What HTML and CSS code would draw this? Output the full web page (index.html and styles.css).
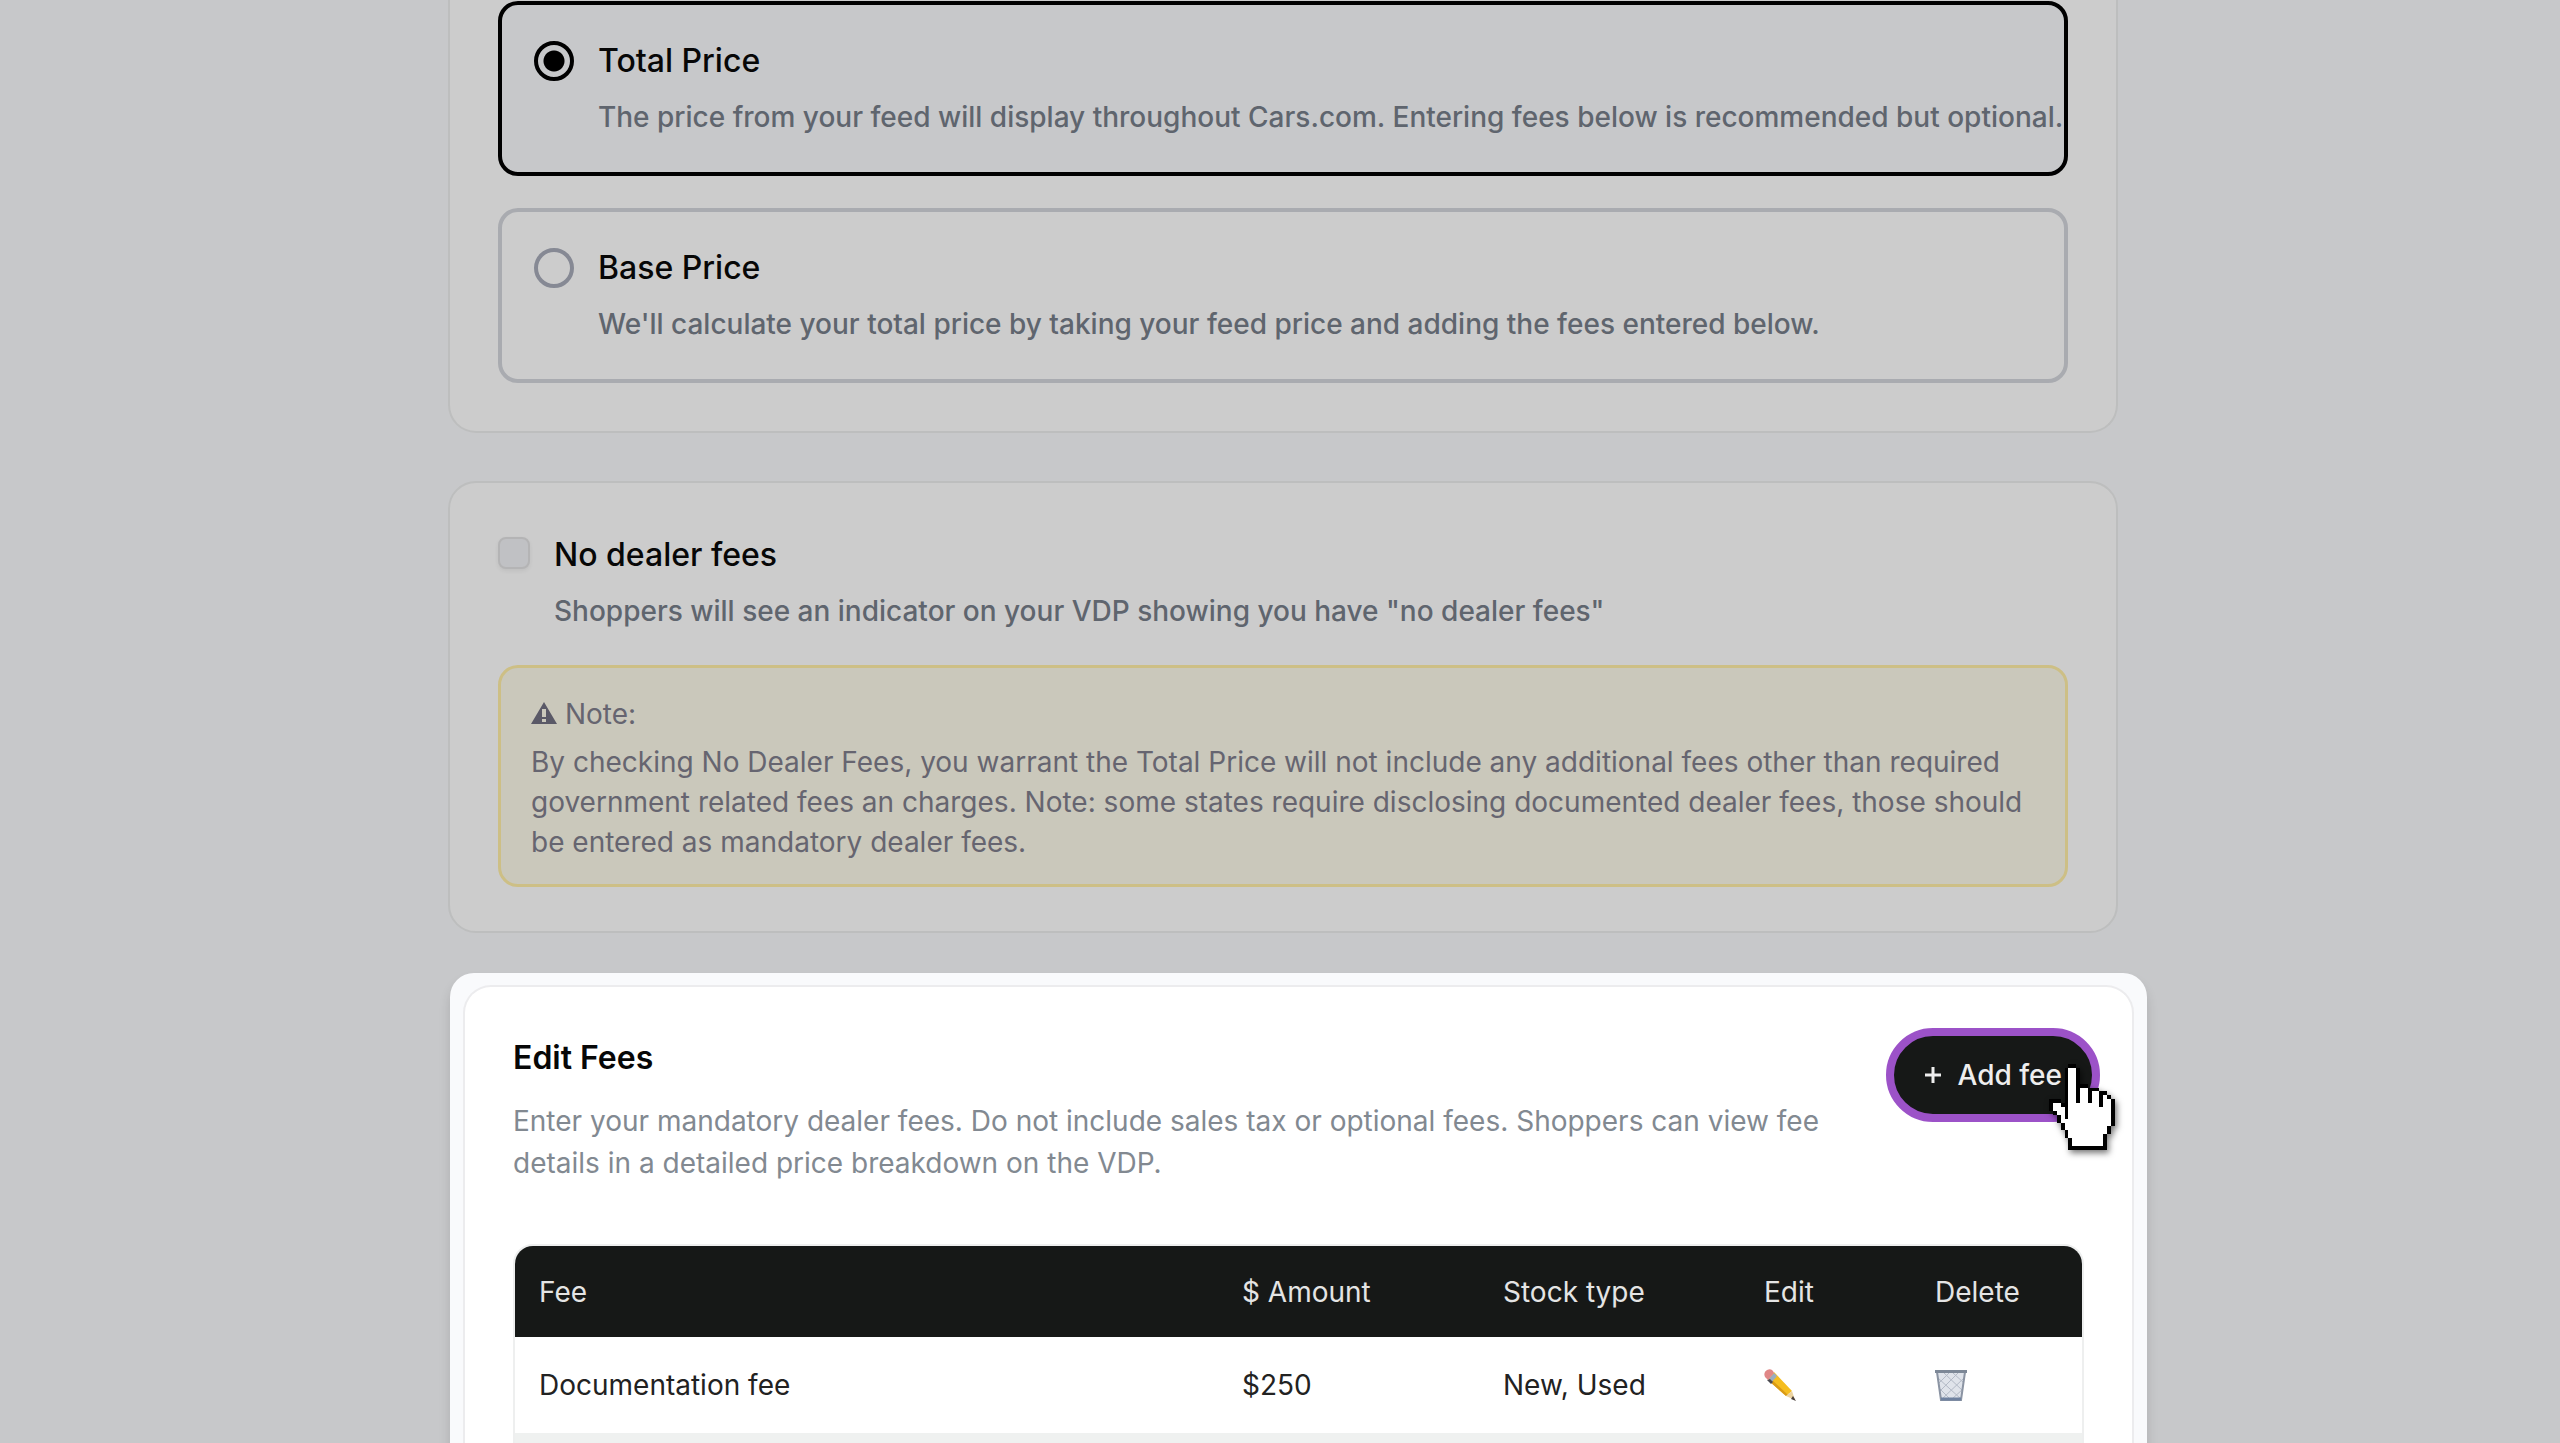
FILE: index.html
```html
<!DOCTYPE html>
<html lang="en">
<head>
<meta charset="utf-8">
<title>Pricing and fees</title>
<link rel="stylesheet" href="styles.css">
</head>
<body>
<main class="page">
  <section class="card card-pricing">
    <div class="option option-selected">
      <input class="radio" type="radio" name="price" id="total" checked>
      <label class="option-text" for="total">
        <span class="title">Total Price</span>
        <span class="desc nowrap">The price from your feed will display throughout Cars.com. Entering fees below is recommended but optional.</span>
      </label>
    </div>
    <div class="option">
      <input class="radio" type="radio" name="price" id="base">
      <label class="option-text" for="base">
        <span class="title">Base Price</span>
        <span class="desc">We'll calculate your total price by taking your feed price and adding the fees entered below.</span>
      </label>
    </div>
  </section>

  <section class="card card-dealer">
    <div class="check-row">
      <input class="checkbox" type="checkbox" id="nofees">
      <label class="option-text" for="nofees">
        <span class="title">No dealer fees</span>
        <span class="desc">Shoppers will see an indicator on your VDP showing you have "no dealer fees"</span>
      </label>
    </div>
    <div class="note">
      <p class="note-head">
        <svg class="warn" viewBox="0 0 26 22" aria-hidden="true"><path fill="currentColor" fill-rule="evenodd" d="M13 0 26 22H0ZM11 7v8h4V7ZM11 17v3h4v-3Z"/></svg>
        Note:
      </p>
      <p class="note-body">By checking No Dealer Fees, you warrant the Total Price will not include any additional fees other than required government related fees an charges. Note: some states require disclosing documented dealer fees, those should be entered as mandatory dealer fees.</p>
    </div>
  </section>

  <div class="spotlight">
    <section class="fees">
      <header class="fees-head">
        <div class="fees-intro">
          <h2 class="fees-title">Edit Fees</h2>
          <p class="fees-desc">Enter your mandatory dealer fees. Do not include sales tax or optional fees. Shoppers can view fee details in a detailed price breakdown on the VDP.</p>
        </div>
        <div class="add-wrap">
          <button class="add" type="button">
            <svg class="plus" viewBox="0 0 18 18" aria-hidden="true"><path d="M9 1v16M1 9h16" stroke="currentColor" stroke-width="3" fill="none"/></svg>
            Add fee
          </button>
          <svg class="cursor" viewBox="0 0 17 22" shape-rendering="crispEdges" aria-hidden="true">
            <path fill="#000" d="M5 0h2v1h1v4h2v1h3v1h2v1h1v1h1v7h-1v2h-1v4H5v-3H4v-2H3v-2H2v-2H1v-1H0V9h3v1h1V1h1z"/>
            <path fill="#fff" d="M5 1h2v9h1V6h2v4h1V7h2v4h1V8h1v1h1v7h-1v2h-1v3H6v-2H5v-2H4v-2H3v-2H2v-1H1v-2h2v1h1v3h1z"/>
          </svg>
        </div>
      </header>
      <table class="table">
        <thead>
          <tr><th class="c-fee">Fee</th><th class="c-amount">$ Amount</th><th class="c-stock">Stock type</th><th class="c-edit">Edit</th><th>Delete</th></tr>
        </thead>
        <tbody>
          <tr>
            <td>Documentation fee</td><td>$250</td><td>New, Used</td>
            <td><button class="icon" type="button" aria-label="Edit fee">
              <svg viewBox="0 0 32 32" aria-hidden="true">
                <path d="M10 3 28 22 22 27 4 11Z" fill="#f5bd1f"/>
                <path d="M4 11 6 9 24 26 22 27Z" fill="#d99a17"/>
                <path d="M10 4 13 7 7 14 4 11Z" fill="#9aacc0"/>
                <path d="M6 10 9 13 7 15 3 11Z" fill="#4a4a50"/>
                <path d="M1 8Q-1 3 3 1Q7-1 9 2L10 4 4 11Z" fill="#e08787"/>
                <path d="M28 22 31 31 22 27Z" fill="#ecd3a0"/>
                <path d="M29 27 32 32 27 30Z" fill="#4a3f3a"/>
              </svg></button></td>
            <td><button class="icon" type="button" aria-label="Delete fee">
              <svg viewBox="0 0 32 32" aria-hidden="true">
                <path d="M2 3H30L26 31H6Z" fill="#dfe3ea"/>
                <path d="M3 9 26 30M5 20 15 30M9 4 28 22M18 4 29 14M29 9 7 30M28 20 17 30M23 4 5 22M14 4 4 14" stroke="#b3bac6" fill="none"/>
                <path d="M2 3 6 31H26L30 3" stroke="#8b94a3" stroke-width="2" fill="none"/>
                <path d="M6 30H26" stroke="#6f82a0" stroke-width="3"/>
                <path d="M0 1H32V4H0Z" fill="#7d8897"/>
              </svg></button></td>
          </tr>
          <tr class="alt"><td></td><td></td><td></td><td></td><td></td></tr>
        </tbody>
      </table>
    </section>
  </div>
</main>
</body>
</html>
```
FILE: styles.css
```css
* { box-sizing: border-box; }

body {
  margin: 0;
  height: 100vh;
  overflow: hidden;
  background: #c7c8ca;
  color: #070707;
  font-family: Inter, "Liberation Sans", sans-serif;
  font-size: 28px;
}

p, h2 { margin: 0; }

.page { padding: 0 442px 0 448px; }

.card {
  border: 2px solid #bdbebe;
  border-radius: 28px;
  background: #ccc;
  padding: 48px;
}

.card-pricing {
  display: grid;
  grid-template-columns: minmax(0, 1fr);
  gap: 32px;
  border-top: 0;
  border-radius: 0 0 28px 28px;
  padding-top: 1px;
}

.option {
  display: flex;
  gap: 24px;
  height: 175px;
  border: 4px solid #a9abb0;
  border-radius: 20px;
  padding: 36px 32px;
}

.option-selected {
  border-color: #000;
  background: #c7c8ca;
}

.radio {
  appearance: none;
  flex: none;
  width: 40px;
  height: 40px;
  margin: 0;
  border: 4px solid #868994;
  border-radius: 50%;
}

.radio:checked {
  border-color: #000;
  background: radial-gradient(circle, #000 10px, transparent 11px);
}

.option-text {
  display: grid;
  gap: 16px;
  align-content: start;
}

.title {
  font-size: 32px;
  line-height: 40px;
  font-weight: 500;
}

.desc {
  color: #5f656e;
  line-height: 40px;
  font-weight: 500;
}

.nowrap { white-space: nowrap; }

.card-dealer { margin-top: 48px; padding-bottom: 44px; }

.check-row {
  display: flex;
  gap: 24px;
  padding-top: 4px;
}

.checkbox {
  appearance: none;
  flex: none;
  width: 32px;
  height: 32px;
  margin: 2px 0 0;
  border: 2px solid #b4b4b5;
  border-radius: 8px;
  background: #c0c1c4;
  box-shadow: 0 2px 4px #0001;
}

.note {
  margin-top: 34px;
  border: 3px solid #cdbf85;
  border-radius: 20px;
  background: #cac8bb;
  padding: 26px 30px 22px;
  color: #666570;
}

.note-head { line-height: 40px; margin-bottom: 8px; }
.note-body { line-height: 40px; }

.warn { width: 26px; height: 22px; color: #5a5967; }

.spotlight {
  margin: 40px -29px 0 2px;
  border-radius: 24px 24px 0 0;
  background: #f9fafc;
  padding: 12px 13px 0;
  box-shadow: 0 8px 12px #0002;
}

.fees {
  border: 2px solid #ececee;
  border-bottom: 0;
  border-radius: 28px 28px 0 0;
  background: #fff;
  padding: 41px 48px 0;
}

.fees-head {
  display: flex;
  justify-content: space-between;
  align-items: flex-start;
  gap: 48px;
  padding-bottom: 60px;
}

.fees-intro { max-width: 1330px; }

.fees-title {
  margin: 10px 0 22px;
  font-size: 32px;
  line-height: 40px;
  font-weight: 600;
}

.fees-desc { color: #828991; line-height: 42px; }

.add-wrap { position: relative; flex: none; margin-right: -16px; }

.add {
  display: flex;
  align-items: center;
  gap: 16px;
  height: 94px;
  border: 8px solid #9c52c8;
  border-radius: 47px;
  background: #161817;
  padding: 0 30px;
  color: #eee;
  font: 500 28px Inter, "Liberation Sans", sans-serif;
  white-space: nowrap;
}

.plus { width: 18px; height: 18px; }

.cursor {
  position: absolute;
  right: -15px;
  top: 36px;
  width: 66px;
  height: 86px;
  filter: drop-shadow(2px 3px 3px #0008);
}

.table {
  width: 100%;
  table-layout: fixed;
  border: 2px solid #eeefef;
  border-spacing: 0;
  border-radius: 20px 20px 0 0;
  overflow: hidden;
}

th, td {
  height: 96px;
  padding: 0 24px;
  text-align: left;
  font-weight: 400;
  color: #222;
}

th {
  height: 91px;
  background: #161817;
  color: #e4e4e4;
}

.c-fee { width: 703px; }
.c-amount { width: 261px; }
.c-stock { width: 261px; }
.c-edit { width: 171px; }

.alt td { background: #eff1f0; }

.icon {
  display: block;
  border: 0;
  background: none;
  padding: 0;
}

.icon svg { display: block; width: 32px; height: 32px; }
```
